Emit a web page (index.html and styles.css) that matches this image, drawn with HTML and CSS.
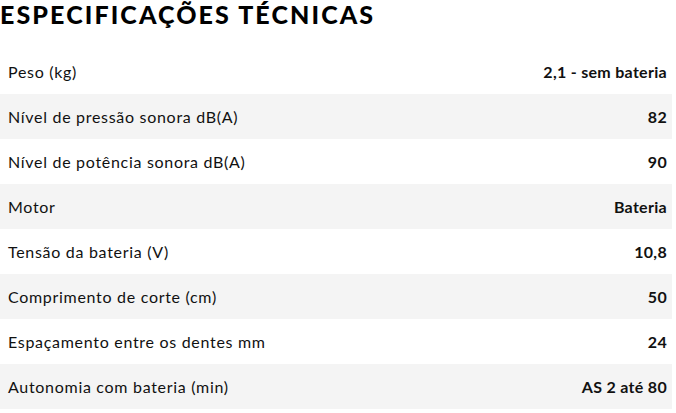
FILE: index.html
```html
<!DOCTYPE html>
<html lang="pt">
<head>
<meta charset="utf-8">
<link rel="stylesheet" href="styles.css">
</head>
<body>
<section class="specs">
  <h2 class="specs-title">Especificações técnicas</h2>
  <ul class="specs-list">
    <li class="spec"><span class="spec-name">Peso (kg)</span><span class="spec-value">2,1 - sem bateria</span></li>
    <li class="spec"><span class="spec-name">Nível de pressão sonora dB(A)</span><span class="spec-value">82</span></li>
    <li class="spec"><span class="spec-name">Nível de potência sonora dB(A)</span><span class="spec-value">90</span></li>
    <li class="spec"><span class="spec-name">Motor</span><span class="spec-value">Bateria</span></li>
    <li class="spec"><span class="spec-name">Tensão da bateria (V)</span><span class="spec-value">10,8</span></li>
    <li class="spec"><span class="spec-name">Comprimento de corte (cm)</span><span class="spec-value">50</span></li>
    <li class="spec"><span class="spec-name">Espaçamento entre os dentes mm</span><span class="spec-value">24</span></li>
    <li class="spec"><span class="spec-name">Autonomia com bateria (min)</span><span class="spec-value">AS 2 até 80</span></li>
  </ul>
</section>
</body>
</html>
```

FILE: styles.css
```css
html, body {
  margin: 0;
  padding: 0;
  background: #ffffff;
}

body {
  font-family: Lato, "Noto Sans", sans-serif;
  color: #111111;
}

.specs {
  width: 672px;
}

.specs-title {
  margin: 0;
  height: 49px;
  box-sizing: border-box;
  padding-top: 1px;
  font-size: 25px;
  line-height: 27px;
  font-weight: 900;
  text-transform: uppercase;
  letter-spacing: 2.1px;
  color: #000000;
}

.specs-list {
  list-style: none;
  margin: 0;
  padding: 0;
}

.spec {
  height: 45px;
  display: flex;
  align-items: center;
  justify-content: space-between;
  padding: 0 5px 0 8px;
  font-size: 16px;
}

.spec:nth-child(even) {
  background: #f4f4f4;
}

.spec-name {
  font-weight: 400;
  letter-spacing: 0.7px;
}

.spec-value {
  font-weight: 700;
  letter-spacing: 0.3px;
}
```
